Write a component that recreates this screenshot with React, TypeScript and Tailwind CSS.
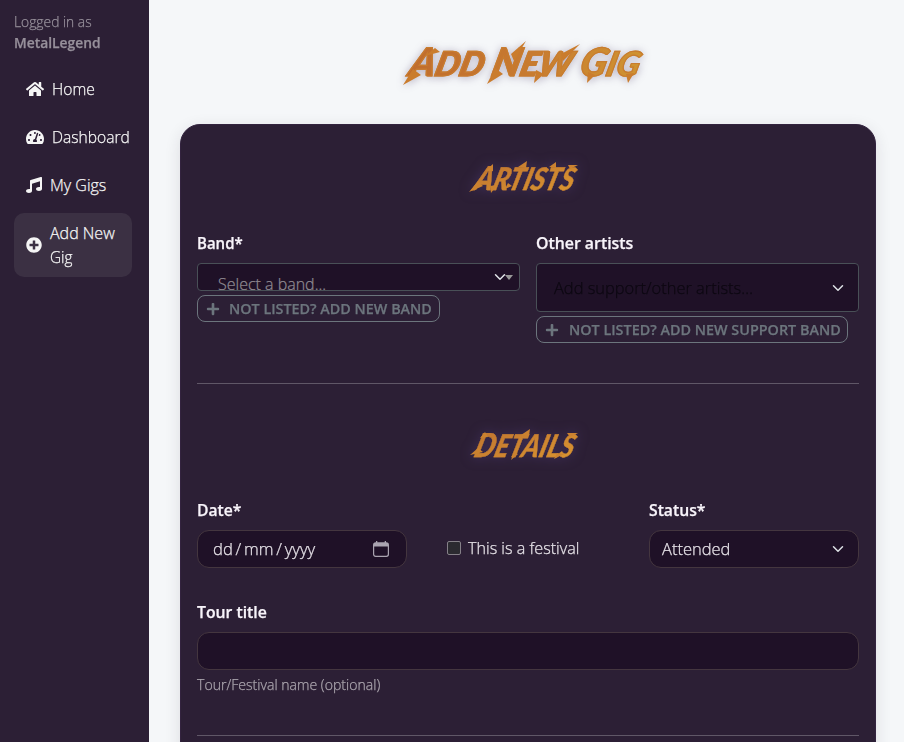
import { useLayoutEffect, useRef, useState } from "react";
import type { ReactNode } from "react";
import { FaHome, FaTachometerAlt, FaMusic, FaPlusCircle, FaPlus } from "react-icons/fa";

/* One line of text, condensed or widened to a given advance width. */
function Fit({ w, children, className = "" }: { w: number; children: ReactNode; className?: string }) {
  const ref = useRef<HTMLSpanElement>(null);
  const [scale, setScale] = useState(1);
  useLayoutEffect(() => {
    if (ref.current) setScale(w / ref.current.offsetWidth);
  }, [w]);
  return (
    <span className="block shrink-0 whitespace-nowrap" style={{ width: w }}>
      <span ref={ref} className={`inline-block origin-left align-top ${className}`} style={{ transform: `scaleX(${scale})` }}>
        {children}
      </span>
    </span>
  );
}

function Chevron({ className = "" }: { className?: string }) {
  return (
    <svg viewBox="0 0 16 16" className={`size-3 shrink-0 ${className}`} fill="none" stroke="#dee2e6" strokeWidth="2" strokeLinecap="round" strokeLinejoin="round">
      <path d="m2 5 6 6 6-6" />
    </svg>
  );
}

function Label({ w, children }: { w: number; children: ReactNode }) {
  return (
    <div className="mb-2 h-6 text-base leading-6 font-semibold text-[#f8f4fa]">
      <Fit w={w}>{children}</Fit>
    </div>
  );
}

function AddButton({ w, children }: { w: number; children: ReactNode }) {
  return (
    <button className="mt-1 flex h-[27px] items-center gap-[6px] rounded-lg border border-[#6c757d] pr-[10px] pl-2 text-[14px] leading-[21px] font-semibold text-[#6c757d]">
      <FaPlus className="size-[14px]" />
      <Fit w={w}>{children}</Fit>
    </button>
  );
}

/* Section heading in the slashed display style; the slashes trail off the letters. */
function SectionTitle({ first, rest, slashes }: { first: string; rest: string; slashes: string }) {
  return (
    <div className="flex justify-center">
      <div className="relative h-10 w-[120px] drop-shadow-[0_0_6px_rgba(90,70,140,0.5)]">
        <h2 className="flex h-10 -skew-x-[16deg] items-center pl-[5px] text-[33px] leading-10 font-black italic">
          <Fit w={106} className="bg-linear-to-br from-[#bd7130] to-[#dc9830] bg-clip-text px-1 font-['Lato'] text-transparent [-webkit-text-stroke:0.3px_#ca8030]">
            {first}<span className="text-[31px]">{rest}</span>
          </Fit>
        </h2>
        <svg viewBox="0 0 120 40" className="absolute inset-0 h-10 w-[120px]" fill="#cb8230">
          <path d={slashes} />
        </svg>
      </div>
    </div>
  );
}

const nav = [
  { icon: <FaHome className="size-[18px]" />, text: "Home", w: 43 },
  { icon: <FaTachometerAlt className="size-[18px]" />, text: "Dashboard", w: 78 },
  { icon: <FaMusic className="size-4" />, text: "My Gigs", w: 56 },
];

export default function App() {
  return (
    <div className="flex h-[742px] w-[904px] overflow-hidden bg-[#f5f7f9] font-['Open_Sans','Noto_Sans',sans-serif] font-light [-webkit-text-stroke:0.25px_currentColor]">
      <aside className="w-[149px] shrink-0 bg-[#2c1f35] px-[14px] pt-[11px] text-[#f5f5f5]">
        <div className="mb-4 text-[14px] leading-[21px] text-[#97909b] [-webkit-text-stroke:0.25px_#97909b]">
          <Fit w={78}>Logged in as</Fit>
          <Fit w={87} className="font-semibold">MetalLegend</Fit>
        </div>
        <nav className="flex w-[118px] flex-col gap-2 text-base leading-6">
          {nav.map((n) => (
            <a key={n.text} className="flex h-10 items-center gap-2 px-3">
              <span className="shrink-0">{n.icon}</span>
              <Fit w={n.w}>{n.text}</Fit>
            </a>
          ))}
          <a className="flex h-16 items-center gap-2 rounded-[10px] bg-[#3b3043] px-3">
            <FaPlusCircle className="size-4 shrink-0" />
            <span>
              <Fit w={65}>Add New</Fit>
              <Fit w={23}>Gig</Fit>
            </span>
          </a>
        </nav>
      </aside>

      <main className="flex-1 pr-[28px] pl-[31px]">
        <div className="flex h-[124px] items-center justify-center">
          <div className="relative h-[60px] w-[250px] drop-shadow-[0_1px_4px_rgba(60,40,90,0.35)]">
            <h1 className="flex h-[60px] -skew-x-[14deg] items-center pl-1 text-[39px] leading-[56px] font-black italic">
              <Fit w={238} className="bg-linear-to-r from-[#c06c2d] via-[#c77a30] to-[#cf9431] bg-clip-text px-1 font-['Lato'] text-transparent [-webkit-text-stroke:1.2px_#c87c2f]">
                A<span className="text-[34px]">DD</span> N<span className="text-[34px]">EW</span> G<span className="text-[34px]">IG</span>
              </Fit>
            </h1>
            <svg viewBox="0 0 250 60" className="absolute inset-0 h-[60px] w-[250px]" fill="#ca7c2d">
              <path d="M0 53 10 37 18 43ZM84 52 92 36 100 42ZM123 9 108 22 111 29ZM177 12 158 22 160 29ZM131 51 133 38 141 42ZM184 51 185 40 192 43ZM225 51 223 42 231 41ZM22 24 32 16 37 20Z" />
            </svg>
          </div>
        </div>

        <section className="h-[700px] rounded-[20px] border border-[#33233f] bg-[#2c1f35] px-4 pt-8 shadow-[0_4px_16px_rgba(44,31,53,0.12)]">
          <SectionTitle first="A" rest="RTISTS" slashes="M1 35 10 24 15 29ZM23 36 22 29 29 28ZM37 32 40 26 44 29ZM25 7 17 14 25 14ZM59 4 50 10 58 11ZM88 5 81 10 88 11ZM110 8 100 8 102 12Z" />
          <div className="mt-[34px] grid grid-cols-2 gap-4">
            <div>
              <Label w={46}>Band*</Label>
              <div className="flex h-7 items-start overflow-hidden rounded border border-[#495057] bg-[#1f1127] pr-[6px] pl-5 text-[#8e8890] [-webkit-text-stroke:0.25px_#8e8890]">
                <div className="mt-2 flex-1 text-base leading-6">
                  <Fit w={108}>Select a band...</Fit>
                </div>
                <Chevron className="mt-[7px]" />
                <span className="mt-[11px] -ml-px border-x-4 border-t-5 border-x-transparent border-t-[#999]" />
              </div>
              <AddButton w={203}>NOT LISTED? ADD NEW BAND</AddButton>
            </div>
            <div>
              <Label w={97}>Other artists</Label>
              <div className="flex h-[49px] items-center justify-between rounded border border-[#495057] bg-[#1f1127] pr-[14px] pl-[17px] text-base text-[#0d0812]">
                <Fit w={199}>Add support/other artists…</Fit>
                <Chevron />
              </div>
              <AddButton w={272}>NOT LISTED? ADD NEW SUPPORT BAND</AddButton>
            </div>
          </div>

          <hr className="mt-10 border-[#605767]" />

          <div className="pt-10">
            <SectionTitle first="D" rest="ETAILS" slashes="M2 31 10 24 15 28ZM43 36 46 28 50 30ZM17 8 12 14 20 13ZM62 5 53 11 61 12ZM86 35 89 29 96 30ZM110 9 99 9 102 13Z" />
          </div>
          <div className="mt-[34px] flex text-base text-[#e4e0e6]">
            <div className="w-[210px]">
              <Label w={44}>Date*</Label>
              <div className="flex h-[38px] items-center justify-between rounded-xl border border-[#44363f] bg-[#1f1127] pr-[17px] pl-[15px]">
                <Fit w={102} className="[word-spacing:-1.5px]">dd / mm / yyyy</Fit>
                <svg viewBox="0 0 16 16" className="size-4">
                  <rect x=".6" y="1.9" width="14.8" height="13.4" rx="2" fill="none" stroke="#aaa4b0" strokeWidth="1.2" />
                  <path d="M1 2h14v3.5H1zM3 0h1.3v2H3zM11.7 0H13v2h-1.3z" fill="#aaa4b0" />
                </svg>
              </div>
            </div>
            <div className="flex flex-1 items-center gap-[7px] pt-[29px] pl-10">
              <span className="size-[14px] rounded-[2px] border border-[#858088] bg-[#2b2a30]" />
              <Fit w={111}>This is a festival</Fit>
            </div>
            <div className="w-[210px]">
              <Label w={56}>Status*</Label>
              <div className="flex h-[38px] items-center justify-between rounded-xl border border-[#44363f] bg-[#1f1127] pr-[14px] pl-3">
                <Fit w={68}>Attended</Fit>
                <Chevron />
              </div>
            </div>
          </div>

          <div className="mt-8">
            <Label w={70}>Tour title</Label>
            <div className="h-[38px] rounded-xl border border-[#44363f] bg-[#1f1127]" />
            <div className="mt-1 text-[14px] leading-[21px] text-[#aaa4ad]">
              <Fit w={183}>Tour/Festival name (optional)</Fit>
            </div>
          </div>
          <hr className="mt-10 border-[#605767]" />
        </section>
      </main>
    </div>
  );
}
